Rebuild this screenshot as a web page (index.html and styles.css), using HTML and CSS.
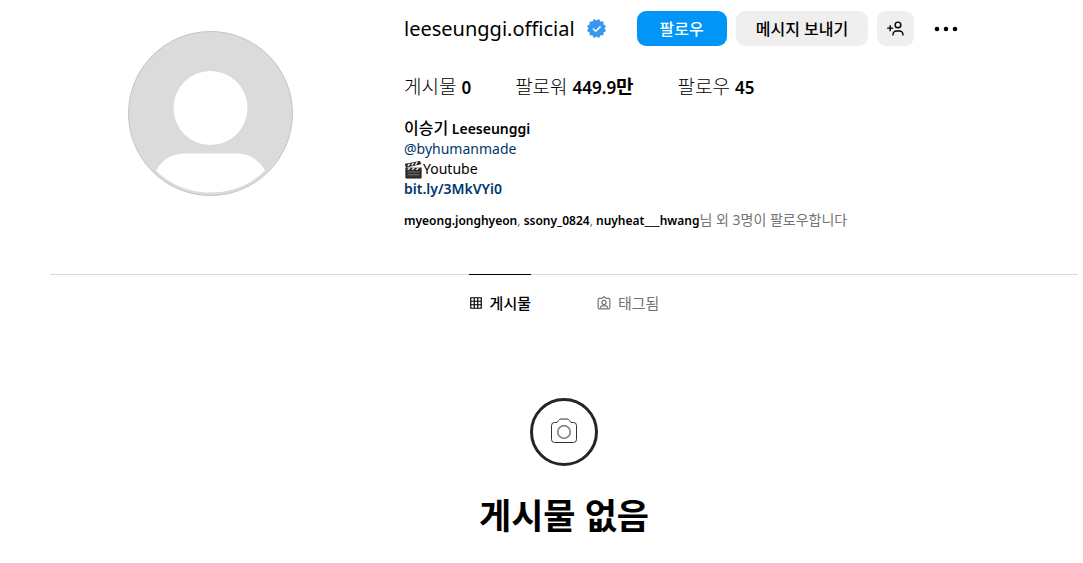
FILE: index.html
```html
<!DOCTYPE html>
<html lang="ko">
<head>
    <meta charset="UTF-8">
    <meta name="viewport" content="width=device-width, initial-scale=1.0">
    <title>leeseunggi.official</title>
    <link rel="stylesheet" href="styles.css">
</head>
<body>
    <main class="profile">
        <header class="profile-header">
            <div class="avatar-column">
                <svg class="avatar" viewBox="0 0 165 165" role="img" aria-label="프로필 사진">
                    <circle cx="82.5" cy="82.5" r="82" fill="#dbdbdb" stroke="#c4c4c4"/>
                    <circle cx="82.5" cy="77" r="37" fill="#fff"/>
                    <path d="M28 139.500C34 129 44 122.500 56 122.500H109C121 122.500 131 129 137 139.500C122 154.500 103 161.500 82.500 161.500S43 154.500 28 139.500Z" fill="#fff"/>
                </svg>
            </div>
            <section class="info">
                <div class="name-row">
                    <h2 class="username">leeseunggi.official</h2>
                    <svg class="verified" viewBox="0 0 40 40" role="img" aria-label="인증됨">
                        <path fill="#3797f0" fill-rule="evenodd" d="M19.998 3.094 14.638 0l-2.972 5.150H5.432v6.354L0 14.640 3.094 20 0 25.359l5.432 3.137v5.905h5.975L14.638 40l5.360-3.094L25.358 40l3.232-5.600h6.162v-6.010L40 25.359 36.905 20 40 14.641l-5.248-3.030v-6.460h-6.419L25.358 0l-5.360 3.094Zm7.415 11.225 2.254 2.287-11.430 11.500-6.835-6.930 2.244-2.258 4.587 4.581 9.180-9.180Z"/>
                    </svg>
                    <div class="actions">
                        <button class="btn btn-primary" type="button">팔로우</button>
                        <button class="btn" type="button">메시지 보내기</button>
                        <button class="btn btn-icon" type="button" aria-label="비슷한 계정">
                            <svg class="icon-user" viewBox="0 0 24 24" fill="none" stroke="#000" stroke-width="2" stroke-linecap="round">
                                <path d="M4.500 8v7M1 11.500h7"/>
                                <circle cx="15.500" cy="7" r="4"/>
                                <path d="M8.500 21v-.5a5 5 0 0 1 5-5h4a5 5 0 0 1 5 5v.5"/>
                            </svg>
                        </button>
                    </div>
                    <button class="more" type="button" aria-label="옵션">
                        <svg class="icon-more" viewBox="0 0 24 6">
                            <circle cx="3" cy="3" r="2.300"/>
                            <circle cx="12" cy="3" r="2.300"/>
                            <circle cx="21" cy="3" r="2.300"/>
                        </svg>
                    </button>
                </div>
                <ul class="stats">
                    <li>게시물 <b>0</b></li>
                    <li><a href="#followers">팔로워 <b>449.9<span class="unit">만</span></b></a></li>
                    <li><a href="#following">팔로우 <b>45</b></a></li>
                </ul>
                <div class="bio">
                    <h1 class="full-name"><span class="hangul">이승기</span> Leeseunggi</h1>
                    <div><a class="mention" href="#byhumanmade">@byhumanmade</a></div>
                    <div class="bio-line">
                        <svg class="clapper" viewBox="0 0 20 20" role="img" aria-label="🎬">
                            <path d="M2 8h16v11H2z" fill="#333"/>
                            <path d="M4 12.500h12M4 15.500h12" stroke="#777"/>
                            <path d="M1.500 4 17 1l1 3.500L2.500 8z" fill="#222"/>
                            <path d="m4 6.500 2-2.500M8 5.700l2-2.500M12 5l2-2.700M4 10.500l2-2M8.500 10.500l2-2M13 10.500l2-2" stroke="#eee" stroke-width="1.500"/>
                            <path d="M2 8v11h16V8M1.500 4l1 4M2 11h16" fill="none" stroke="#222"/>
                        </svg>
                        <span>Youtube</span>
                    </div>
                    <div><a class="site" href="#site">bit.ly/3MkVYi0</a></div>
                </div>
                <a class="mutual" href="#mutual"><b>myeong.jonghyeon</b>, <b>ssony_0824</b>, <b>nuyheat___hwang</b><span class="mutual-rest">님 외 3명이 팔로우합니다</span></a>
            </section>
        </header>
        <nav class="tabs">
            <a class="tab active" href="#posts">
                <svg class="tab-icon" viewBox="0 0 24 24" fill="none" stroke="currentColor" stroke-width="2">
                    <path d="M3 3h18v18H3zM9 3v18M15 3v18M3 9h18M3 15h18"/>
                </svg>
                <span>게시물</span>
            </a>
            <a class="tab" href="#tagged">
                <svg class="tab-icon" viewBox="0 0 24 24" fill="none" stroke="currentColor" stroke-width="2" stroke-linejoin="round">
                    <path d="M8.500 4 12 1l3.500 3H20a2 2 0 0 1 2 2v14a2 2 0 0 1-2 2H4a2 2 0 0 1-2-2V6a2 2 0 0 1 2-2z"/>
                    <circle cx="12" cy="11" r="3.500"/>
                    <path d="M6 21v-1a3 3 0 0 1 3-3h6a3 3 0 0 1 3 3v1"/>
                </svg>
                <span>태그됨</span>
            </a>
        </nav>
        <section class="empty">
            <svg class="empty-icon" viewBox="0 0 68 68" fill="none">
                <circle cx="34" cy="34" r="32.500" stroke="#262626" stroke-width="3"/>
                <path d="M24.500 24.500H26c1.500 0 2-1 2.700-2.200.5-.9 1.300-1.300 2.300-1.300h6c1 0 1.800.4 2.300 1.300.7 1.200 1.200 2.200 2.700 2.200h1.500a3 3 0 0 1 3 3v14a3 3 0 0 1-3 3h-19a3 3 0 0 1-3-3v-14a3 3 0 0 1 3-3z" stroke="#333"/>
                <circle cx="34" cy="34" r="6.300" stroke="#888" stroke-width="1.700"/>
            </svg>
            <h2 class="empty-title">게시물 없음</h2>
        </section>
    </main>
</body>
</html>
```
FILE: styles.css
```css
* {
    box-sizing: border-box;
}
body {
    margin: 0;
    background-color: #fff;
    color: #000;
    font-family: "Noto Sans", "Noto Sans CJK KR", sans-serif;
    font-size: 14px;
    line-height: 20px;
}
h1, h2, ul {
    margin: 0;
    padding: 0;
}
a {
    color: inherit;
    text-decoration: none;
}
b {
    font-weight: 600;
}
svg {
    display: block;
    flex-shrink: 0;
}
button {
    border: 0;
    font-family: inherit;
    color: inherit;
    cursor: pointer;
}
.profile {
    margin: 0 5px 0 50px;
}
.profile-header {
    display: flex;
    gap: 34px;
    padding: 11px 0 43px;
}
.avatar-column {
    display: flex;
    justify-content: center;
    width: 320px;
    padding-top: 20px;
    flex-shrink: 0;
}
.avatar {
    width: 165px;
    height: 165px;
}
.info {
    flex: 1;
}
.name-row {
    display: flex;
    align-items: center;
}
.username {
    font-size: 20px;
    line-height: 24px;
    font-weight: 400;
}
.verified {
    width: 19px;
    height: 19px;
    margin-left: 12px;
}
.actions {
    display: flex;
    gap: 9px;
    margin-left: 31px;
}
.btn {
    height: 35px;
    padding: 0 20px;
    border-radius: 9px;
    background-color: #efefef;
    font-size: 16px;
    line-height: 20px;
    font-weight: 500;
    white-space: nowrap;
}
.btn-primary {
    padding: 0 23px;
    background-color: #0095f6;
    color: #fff;
}
.btn-icon {
    padding: 0 10px;
}
.icon-user {
    width: 17px;
    height: 17px;
}
.more {
    margin-left: 20px;
    padding: 12px 0;
    background: none;
}
.icon-more {
    width: 24px;
    height: 6px;
}
.stats {
    display: flex;
    gap: 44px;
    margin-top: 28px;
    list-style: none;
    font-size: 19px;
    line-height: 26px;
    font-weight: 300;
}
.stats b {
    font-size: 17px;
}
.stats .unit {
    font-size: 19px;
    font-weight: 700;
}
.bio {
    margin-top: 17px;
}
.full-name {
    font-size: 14px;
    line-height: 20px;
    font-weight: 600;
}
.full-name .hangul {
    font-size: 16px;
    font-weight: 500;
}
.bio-line {
    display: flex;
    align-items: center;
}
.clapper {
    width: 19px;
    height: 19px;
}
.mention,
.site {
    color: #00376b;
}
.site {
    font-weight: 600;
}
.mutual {
    display: block;
    margin-top: 11px;
    font-size: 12px;
    color: #737373;
}
.mutual b {
    color: #000;
}
.mutual-rest {
    font-size: 14px;
}
.tabs {
    display: flex;
    justify-content: center;
    gap: 66px;
    border-top: 1px solid #dbdbdb;
}
.tab {
    display: flex;
    align-items: center;
    gap: 7px;
    height: 56px;
    margin-top: -1px;
    border-top: 1px solid transparent;
    color: #737373;
    font-size: 15px;
}
.tab.active {
    border-top-color: #000;
    color: #000;
    font-weight: 500;
}
.tab-icon {
    width: 14px;
    height: 14px;
}
.empty {
    display: flex;
    flex-direction: column;
    align-items: center;
    gap: 28px;
    padding: 68px 0 20px;
}
.empty-icon {
    width: 68px;
    height: 68px;
}
.empty-title {
    font-size: 35px;
    line-height: 44px;
    font-weight: 700;
}
```
